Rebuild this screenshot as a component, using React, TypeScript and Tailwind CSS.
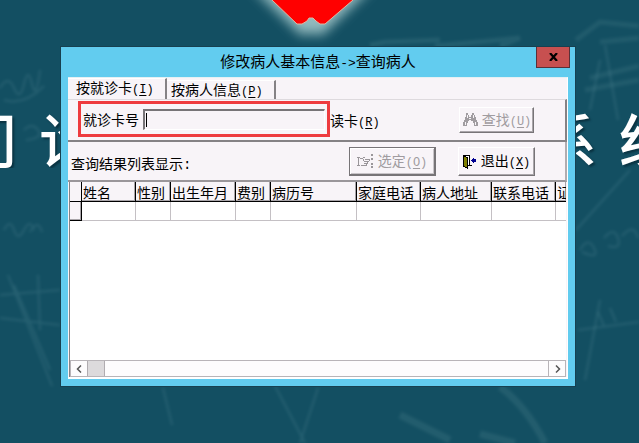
import type { ReactNode } from "react";

const columns = [
  { name: "姓名", width: "w-[54px]" },
  { name: "性别", width: "w-[35px]" },
  { name: "出生年月", width: "w-[65px]" },
  { name: "费别", width: "w-[35px]" },
  { name: "病历号", width: "w-[86px]" },
  { name: "家庭电话", width: "w-[64px]" },
  { name: "病人地址", width: "w-[71px]" },
  { name: "联系电话", width: "w-[64px]" },
  { name: "证", width: "" },
];

function Key({ children }: { children: string }) {
  return (
    <span className="font-['Liberation_Mono',monospace] text-[12px]">
      (<span className="underline underline-offset-2">{children}</span>)
    </span>
  );
}

function Backdrop() {
  return (
    <svg
      className="absolute inset-0 h-full w-full"
      viewBox="0 0 639 443"
      preserveAspectRatio="xMidYMin slice"
      aria-hidden="true"
    >
      <defs>
        <filter id="chalk" x="-10%" y="-10%" width="120%" height="120%">
          <feGaussianBlur stdDeviation="1.5" />
        </filter>
        <filter id="glow" x="-50%" y="-50%" width="200%" height="200%">
          <feGaussianBlur stdDeviation="6" />
        </filter>
      </defs>
      <g filter="url(#chalk)" fill="none" stroke="#6fa0a8" strokeOpacity="0.2" strokeWidth="2">
        <path d="M8 275 L52 386 M0 295 L60 290 M0 318 L60 325 M14 285 L50 370 M38 275 L40 330" />
        <path d="M0 88 q8 -14 14 0 t10 -4 t8 0 t8 -14 M4 100 q20 6 40 -14" />
        <path d="M4 230 q6 -12 10 0 t10 0 t10 0 M30 232 q8 -14 12 0 M24 130 q8 -8 14 0 t-12 10" />
        <path d="M163 388 L172 425 M275 386 L305 443 M318 388 L300 443" />
        <path strokeWidth="7" strokeOpacity="0.16" d="M500 387 Q525 405 545 443 M400 415 L450 440 M480 434 L515 443" />
        <path strokeWidth="5" strokeOpacity="0.16" d="M370 45 L385 42 L440 40 M435 46 L520 38 L500 46" />
        <path strokeWidth="5" strokeOpacity="0.14" d="M576 40 L600 22 L639 26 M590 78 L639 66 M585 90 L639 80 M600 42 L639 38" />
        <path d="M605 45 L618 120 M600 60 L590 110" />
        <path d="M578 330 L639 322 M598 312 L604 326 M610 308 L616 322 M580 250 q8 -14 14 -2 t-12 4 M604 238 q10 -12 14 0 t-10 8 M622 236 q12 -14 16 2" />
        <path d="M600 300 L585 380 M630 170 L576 230" />
      </g>
      <path
        d="M256 -10 L302 34 Q311 30 321 34 L368 -10 Z"
        fill="#b2d4d4"
        stroke="#b2d4d4"
        strokeWidth="3"
        opacity="0.8"
        filter="url(#glow)"
      />
      <path
        d="M262 -10 L272 0 L297 24 L302 24 L307 21 L309 18 L313 18 L316 21 L320 24 L325 24 L353 0 L363 -10 Z"
        fill="#ff0000"
        stroke="#e0b5a0"
        strokeWidth="1"
      />
    </svg>
  );
}

function Caption({ children }: { children: ReactNode }) {
  return (
    <div className="flex gap-[22px] text-[58px] leading-[60px] font-medium text-white [text-shadow:2px_2px_2px_#0a3342]">
      {children}
    </div>
  );
}

function Binoculars() {
  return (
    <svg width="16" height="14" viewBox="0 0 16 14" shapeRendering="crispEdges" aria-hidden="true">
      <path
        fill="#a09ca0"
        d="M4 0h2v2h1v2h2V2h1V0h2v2h1v2h1v3h1v2h1v4h-4v-3h-1V8H9V7H7v1H6v2H5v3H1V9h1V7h1V4h1z"
      />
      <path fill="#f8f4f8" d="M5 2h1v3H5zM11 2h1v3h-1zM3 9h1v3H3zM13 9h1v3h-1zM7 5h2v1H7z" />
    </svg>
  );
}

function Hand() {
  return (
    <svg width="17" height="14" viewBox="0 0 17 14" shapeRendering="crispEdges" aria-hidden="true">
      <path
        fill="none"
        stroke="#9a969a"
        d="M0 3.5h3M1.5 3v8M0 11.5h3M3 4.5h3M6 3.5h2M8 5.5h4M12.5 5v2M7 7.5h5M10.5 8v2M7 9.5h3M9.5 10v2M4 11.5h5M6.500 5v2"
      />
      <path fill="#9a969a" d="M14 0h2v2h-2zM14 4h2v2h-2zM14 9h2v2h-2zM14 12h2v2h-2z" />
    </svg>
  );
}

function Door() {
  return (
    <svg width="14" height="14" viewBox="0 0 14 14" shapeRendering="crispEdges" aria-hidden="true">
      <path d="M0.500 0.500h6v10h-6z" fill="#fff" stroke="#000" />
      <path d="M0.500 0.500L4.500 3v10.500L0.500 11z" fill="#808000" stroke="#000" />
      <path d="M8 5h1V4h1V3h1v1h2v3h-2v1h-1V7H9V6H8z" fill="#000090" />
      <path d="M5 10.500h4" stroke="#000" />
    </svg>
  );
}

function Chevron({ d }: { d: string }) {
  return (
    <svg width="7" height="8" viewBox="0 0 7 8" aria-hidden="true">
      <path d={d} fill="none" stroke="#555" strokeWidth="1.500" />
    </svg>
  );
}

const raised =
  "flex items-center justify-center border border-t-white border-l-white border-r-[#777477] border-b-[#777477] shadow-[inset_-1px_-1px_0_#aaa6aa]";

export default function App() {
  return (
    <main className="relative min-h-screen overflow-hidden bg-[#134f62] pt-[47px] pb-14 font-['Noto_Sans_CJK_SC',sans-serif] text-[14px] leading-4 text-black">
      <Backdrop />
      <div className="absolute inset-x-0 top-[108px] flex justify-between overflow-hidden" aria-hidden="true">
        <div className="-ml-[41px]">
          <Caption>
            <span>门</span>
            <span>诊</span>
          </Caption>
        </div>
        <div className="-mr-[38px]">
          <Caption>
            <span>系</span>
            <span>统</span>
          </Caption>
        </div>
      </div>

      <section
        aria-label="修改病人基本信息->查询病人"
        className="relative mr-16 ml-[61px] bg-[#62ccef] px-[7px] pb-[7px] shadow-[0_0_0_1px_#174050]"
      >
        <header className="grid h-[30px] grid-cols-[1fr_auto_1fr]">
          <h1 className="col-start-2 pt-[5px] text-[15px] leading-[18px]">
            修改病人基本信息<span className="font-['Liberation_Mono',monospace] text-[13px]">-&gt;</span>查询病人
          </h1>
          <button
            type="button"
            aria-label="关闭"
            className="mr-[-2px] flex h-[21px] w-[34px] items-center justify-center justify-self-end border border-t-0 border-[#5a3038] bg-[#c75050]"
          >
            <svg width="9" height="8" viewBox="0 0 9 8" aria-hidden="true">
              <path d="M1 0l7 8M8 0L1 8" stroke="#000" strokeWidth="2.200" />
            </svg>
          </button>
        </header>

        <div className="border-t border-r border-b-2 border-white border-t-[#e4f0f4] bg-[#f8f4f8]">
          <div role="tablist" className="flex h-[21px] items-end">
            <button
              type="button"
              role="tab"
              aria-selected="true"
              className="h-[21px] w-[99px] border-t border-r-2 border-t-white border-r-[#858285] pb-1 pl-2 text-left"
            >
              按就诊卡<Key>I</Key>
            </button>
            <button
              type="button"
              role="tab"
              aria-selected="false"
              className="h-[19px] w-[109px] border-t border-r-2 border-t-white border-r-[#858285] pl-1 text-left"
            >
              按病人信息<Key>P</Key>
            </button>
          </div>

          <div
            role="tabpanel"
            className="flex h-[43px] items-start border-t border-r-2 border-b-2 border-t-[#dedade] border-r-[#858285] border-b-[#858285] pl-[10px]"
          >
            <label className="mt-px flex h-9 w-[252px] items-center border-3 border-[#ee3b3f] pr-[2px] pl-[2px]">
              <span className="w-[60px] shrink-0">就诊卡号</span>
              <span className="relative flex min-w-0 flex-1">
                <input
                  type="text"
                  className="h-[21px] w-full min-w-0 border border-t-2 border-l-2 border-t-[#777477] border-r-white border-b-white border-l-[#777477] bg-[#f8f4f8] px-1 outline-none"
                />
                <span className="absolute top-1 left-[3px] h-[14px] w-px bg-black" />
              </span>
            </label>
            <span className="mt-3 flex-1">
              读卡<Key>R</Key>
            </span>
            <button
              type="button"
              disabled
              className={`${raised} mt-[7px] mr-[31px] h-[26px] w-[75px] gap-1 text-[#a09ca0]`}
            >
              <Binoculars />
              <span>
                查找<Key>U</Key>
              </span>
            </button>
          </div>

          <div className="flex h-10 items-start border-r-2 border-b-2 border-r-[#b0acb0] border-b-[#9a969a] pl-[3px]">
            <p className="mt-[13px] flex-1">
              查询结果列表显示<span className="font-['Liberation_Mono',monospace]">:</span>
            </p>
            <button
              type="button"
              disabled
              className="mt-[5px] flex h-[29px] w-[87px] items-center justify-center gap-1 border border-r-2 border-b-2 border-[#777477] text-[#a09ca0] shadow-[inset_1px_1px_0_#fff,inset_-1px_-1px_0_#c8c4c8]"
            >
              <Hand />
              <span>
                选定<Key>O</Key>
              </span>
            </button>
            <button type="button" className={`${raised} mt-[5px] mr-[30px] ml-[22px] h-[29px] w-[77px] gap-1`}>
              <Door />
              <span>
                退出<Key>X</Key>
              </span>
            </button>
          </div>

          <div className="mr-px ml-px flex min-h-[195px] flex-col border-l border-l-[#858285] bg-white">
            <table className="w-full table-fixed border-separate border-spacing-0">
              <thead>
                <tr className="bg-[#f8f4f8]">
                  <th className="h-5 w-3 border-r border-b border-black p-0" />
                  {columns.map((column) => (
                    <th
                      key={column.name}
                      className={`${column.width} h-5 overflow-hidden border-r border-b border-black p-0 pl-px text-left font-normal whitespace-nowrap shadow-[inset_-1px_-1px_0_#a8a4a8] last:border-r-0`}
                    >
                      {column.name}
                    </th>
                  ))}
                </tr>
              </thead>
              <tbody>
                <tr>
                  <td className="h-[19px] border-r border-b border-black bg-[#f8f4f8] p-0 shadow-[inset_-1px_-1px_0_#a8a4a8]" />
                  {columns.map((column) => (
                    <td key={column.name} className="border-r border-b border-[#c4c0c4] p-0 last:border-r-0" />
                  ))}
                </tr>
              </tbody>
            </table>
            <div className="mt-auto flex h-[17px] border border-[#b8b4b8] bg-[#fdfcfd]">
              <button type="button" aria-label="向左滚动" className="flex w-4 items-center justify-center">
                <Chevron d="M5 0.500L1.500 4L5 7.500" />
              </button>
              <span className="w-[18px] border-x border-[#b0acb0] bg-[#dcdadc]" />
              <span className="flex-1" />
              <button
                type="button"
                aria-label="向右滚动"
                className="flex w-[17px] items-center justify-center border-l border-[#b8b4b8]"
              >
                <Chevron d="M2 0.500L5.500 4L2 7.500" />
              </button>
            </div>
          </div>
        </div>
      </section>
    </main>
  );
}
